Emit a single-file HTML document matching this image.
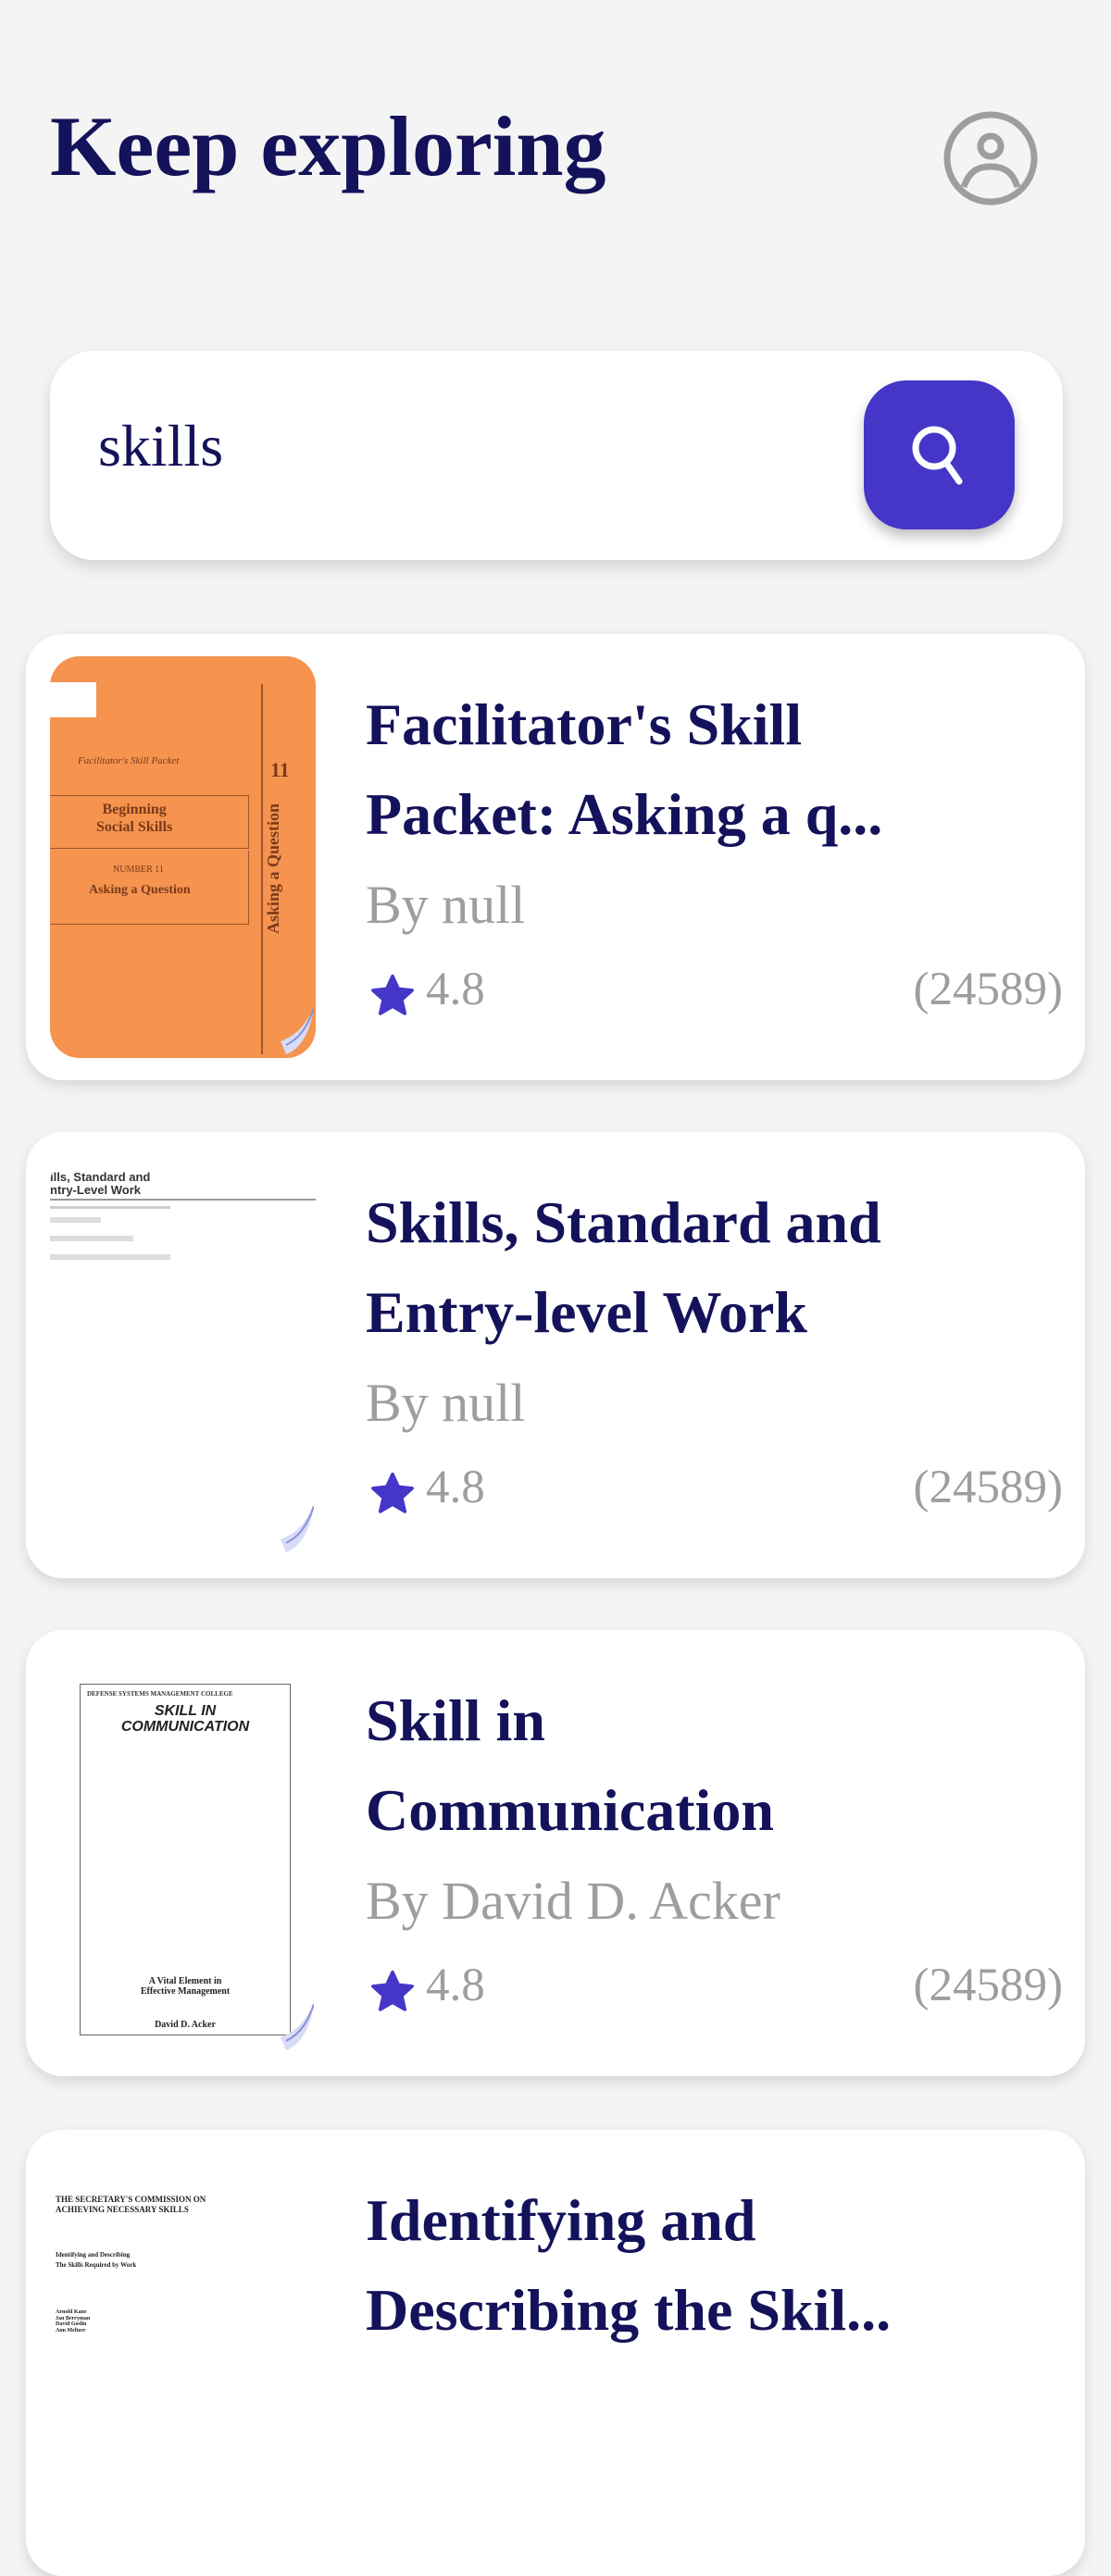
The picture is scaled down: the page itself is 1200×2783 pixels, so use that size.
<!DOCTYPE html>
<html><head><meta charset="utf-8"><style>
*{margin:0;padding:0;box-sizing:border-box}
body{width:1200px;height:2550px;background:#f4f4f4;position:relative;overflow:hidden;font-family:"Liberation Serif",serif;color:#14125a}
.a{position:absolute;white-space:nowrap;line-height:1}
.card{position:absolute;left:28px;width:1144px;height:482px;background:#fff;border-radius:40px;box-shadow:0 6px 14px rgba(0,0,0,0.12)}
.img{position:absolute;left:26px;top:24px;width:287px;height:434px;border-radius:32px;overflow:hidden;background:#fff}
.t{position:absolute;left:367px;font-size:64px;font-weight:bold;line-height:1;white-space:nowrap;color:#14125a}
.by{position:absolute;left:367px;font-size:58px;color:#9e9e9e;line-height:1;white-space:nowrap}
.r{position:absolute;font-size:51px;color:#9e9e9e;line-height:1;white-space:nowrap}
.star{position:absolute;left:368px;width:56px;height:54px}
.curl{position:absolute;right:2px;bottom:4px;width:40px;height:50px}
.s{position:absolute;white-space:nowrap;line-height:1}
</style></head><body>

<div class="a" style="left:54px;top:112px;font-size:92px;font-weight:bold;color:#14125a">Keep exploring</div>
<svg style="position:absolute;left:1017px;top:118px" width="106" height="106" viewBox="0 0 106 106">
<circle cx="53" cy="53" r="47" fill="none" stroke="#9e9e9e" stroke-width="7"/>
<circle cx="53" cy="40" r="11" fill="none" stroke="#9e9e9e" stroke-width="7"/>
<path d="M24 84 C30 66 40 62 53 62 C66 62 76 66 82 84" fill="none" stroke="#9e9e9e" stroke-width="7"/>
</svg>

<div style="position:absolute;left:54px;top:379px;width:1094px;height:226px;background:#fff;border-radius:48px;box-shadow:0 8px 16px rgba(0,0,0,0.13)"></div>
<div class="a" style="left:106px;top:450px;font-size:64px;color:#14125a">skills</div>
<div style="position:absolute;left:933px;top:411px;width:163px;height:161px;background:#4536c8;border-radius:46px;box-shadow:0 8px 14px rgba(0,0,0,0.25)"></div>
<svg style="position:absolute;left:974px;top:450px" width="84" height="84" viewBox="0 0 84 84">
<circle cx="35" cy="34" r="20" fill="none" stroke="#fff" stroke-width="7"/>
<path d="M48 50 L62 70" stroke="#fff" stroke-width="7" stroke-linecap="round"/>
</svg>

<!-- card 1 -->
<div class="card" style="top:685px">
 <div class="img" style="background:#f5934f">
  <div style="position:absolute;left:0;top:28px;width:50px;height:38px;background:#fff"></div>
  <div class="s" style="left:30px;top:108px;font-size:11px;font-style:italic;color:#7a3a1a">Facilitator's Skill Packet</div>
  <div style="position:absolute;left:0;top:150px;width:215px;height:58px;border:1.5px solid #a0552b;border-left:none"></div>
  <div class="s" style="left:50px;top:156px;font-size:16px;font-weight:bold;color:#7a3a1a;text-align:center;line-height:1.2">Beginning<br>Social Skills</div>
  <div style="position:absolute;left:0;top:210px;width:215px;height:80px;border:1.5px solid #a0552b;border-left:none;border-top:none"></div>
  <div class="s" style="left:68px;top:226px;font-size:10px;color:#7a3a1a">NUMBER 11</div>
  <div class="s" style="left:42px;top:246px;font-size:14px;font-weight:bold;color:#7a3a1a">Asking a Question</div>
  <div style="position:absolute;left:228px;top:30px;width:40px;height:400px;border-left:2px solid #a0552b"></div>
  <div class="s" style="left:238px;top:112px;font-size:22px;font-weight:bold;color:#7a3a1a">11</div>
  <div class="s" style="left:232px;top:300px;font-size:18px;font-weight:bold;color:#7a3a1a;transform:rotate(-90deg);transform-origin:left top">Asking a Question</div>
  <svg class="curl" viewBox="0 0 40 50"><path d="M40 0 C30 20 20 30 4 36 L10 50 C26 44 36 26 40 0Z" fill="#d8dcf6"/><path d="M40 0 C32 24 22 34 10 40" stroke="#8b8fd8" fill="none" stroke-width="2"/></svg>
 </div>
 <div class="t" style="top:66px">Facilitator's Skill</div>
 <div class="t" style="top:163px">Packet: Asking a q...</div>
 <div class="by" style="top:264px">By null</div>
 <svg class="star" style="top:364px" viewBox="0 0 24 24"><path d="M12 2.5 L14.8 8.6 L21.4 9.3 L16.4 13.8 L17.9 20.4 L12 17 L6.1 20.4 L7.6 13.8 L2.6 9.3 L9.2 8.6Z" fill="#4536c8" stroke="#4536c8" stroke-width="1.6" stroke-linejoin="round"/></svg>
 <div class="r" style="left:432px;top:359px">4.8</div>
 <div class="r" style="right:24px;top:359px">(24589)</div>
</div>

<!-- card 2 -->
<div class="card" style="top:1223px">
 <div class="img">
  <div class="s" style="left:0;top:18px;font-size:13px;font-weight:bold;font-family:'Liberation Sans',sans-serif;color:#333;line-height:1.05">ills, Standard and<br>ntry-Level Work</div>
  <div style="position:absolute;left:0;top:48px;width:290px;height:2px;background:#999"></div>
  <div style="position:absolute;left:0;top:56px;width:130px;height:3px;background:#ccc"></div>
  <div style="position:absolute;left:0;top:68px;width:55px;height:6px;background:#ddd"></div>
  <div style="position:absolute;left:0;top:88px;width:90px;height:6px;background:#ddd"></div>
  <div style="position:absolute;left:0;top:108px;width:130px;height:6px;background:#ddd"></div>
  <svg class="curl" viewBox="0 0 40 50"><path d="M40 0 C30 20 20 30 4 36 L10 50 C26 44 36 26 40 0Z" fill="#d8dcf6"/><path d="M40 0 C32 24 22 34 10 40" stroke="#8b8fd8" fill="none" stroke-width="2"/></svg>
 </div>
 <div class="t" style="top:66px">Skills, Standard and</div>
 <div class="t" style="top:163px">Entry-level Work</div>
 <div class="by" style="top:264px">By null</div>
 <svg class="star" style="top:364px" viewBox="0 0 24 24"><path d="M12 2.5 L14.8 8.6 L21.4 9.3 L16.4 13.8 L17.9 20.4 L12 17 L6.1 20.4 L7.6 13.8 L2.6 9.3 L9.2 8.6Z" fill="#4536c8" stroke="#4536c8" stroke-width="1.6" stroke-linejoin="round"/></svg>
 <div class="r" style="left:432px;top:359px">4.8</div>
 <div class="r" style="right:24px;top:359px">(24589)</div>
</div>

<!-- card 3 -->
<div class="card" style="top:1761px">
 <div class="img">
  <div style="position:absolute;left:32px;top:34px;width:228px;height:380px;border:1.5px solid #666"></div>
  <div class="s" style="left:40px;top:42px;font-size:7px;font-weight:bold;color:#333">DEFENSE SYSTEMS MANAGEMENT COLLEGE</div>
  <div class="s" style="left:32px;top:56px;width:228px;text-align:center;font-size:16px;font-style:italic;font-weight:bold;font-family:'Liberation Sans',sans-serif;color:#222;line-height:1.05">SKILL IN<br>COMMUNICATION</div>
  <div class="s" style="left:32px;top:350px;width:228px;text-align:center;font-size:10px;font-weight:bold;color:#222;line-height:1.1">A Vital Element in<br>Effective Management</div>
  <div class="s" style="left:32px;top:398px;width:228px;text-align:center;font-size:10px;font-weight:bold;color:#222">David D. Acker</div>
  <svg class="curl" viewBox="0 0 40 50"><path d="M40 0 C30 20 20 30 4 36 L10 50 C26 44 36 26 40 0Z" fill="#d8dcf6"/><path d="M40 0 C32 24 22 34 10 40" stroke="#8b8fd8" fill="none" stroke-width="2"/></svg>
 </div>
 <div class="t" style="top:66px">Skill in</div>
 <div class="t" style="top:163px">Communication</div>
 <div class="by" style="top:264px">By David D. Acker</div>
 <svg class="star" style="top:364px" viewBox="0 0 24 24"><path d="M12 2.5 L14.8 8.6 L21.4 9.3 L16.4 13.8 L17.9 20.4 L12 17 L6.1 20.4 L7.6 13.8 L2.6 9.3 L9.2 8.6Z" fill="#4536c8" stroke="#4536c8" stroke-width="1.6" stroke-linejoin="round"/></svg>
 <div class="r" style="left:432px;top:359px">4.8</div>
 <div class="r" style="right:24px;top:359px">(24589)</div>
</div>

<!-- card 4 -->
<div class="card" style="top:2301px">
 <div class="img">
  <div class="s" style="left:6px;top:46px;font-size:9px;font-weight:bold;color:#222;line-height:1.2">THE SECRETARY'S COMMISSION ON<br>ACHIEVING NECESSARY SKILLS</div>
  <div class="s" style="left:6px;top:106px;font-size:7px;font-weight:bold;color:#222;line-height:1.5">Identifying and Describing<br>The Skills Required by Work</div>
  <div class="s" style="left:6px;top:170px;font-size:6px;font-weight:bold;color:#222;line-height:1.1">Arnold Kane<br>Jan Berryman<br>David Goslin<br>Ann Meltzer</div>
 </div>
 <div class="t" style="top:66px">Identifying and</div>
 <div class="t" style="top:163px">Describing the Skil...</div>
</div>

</body></html>
